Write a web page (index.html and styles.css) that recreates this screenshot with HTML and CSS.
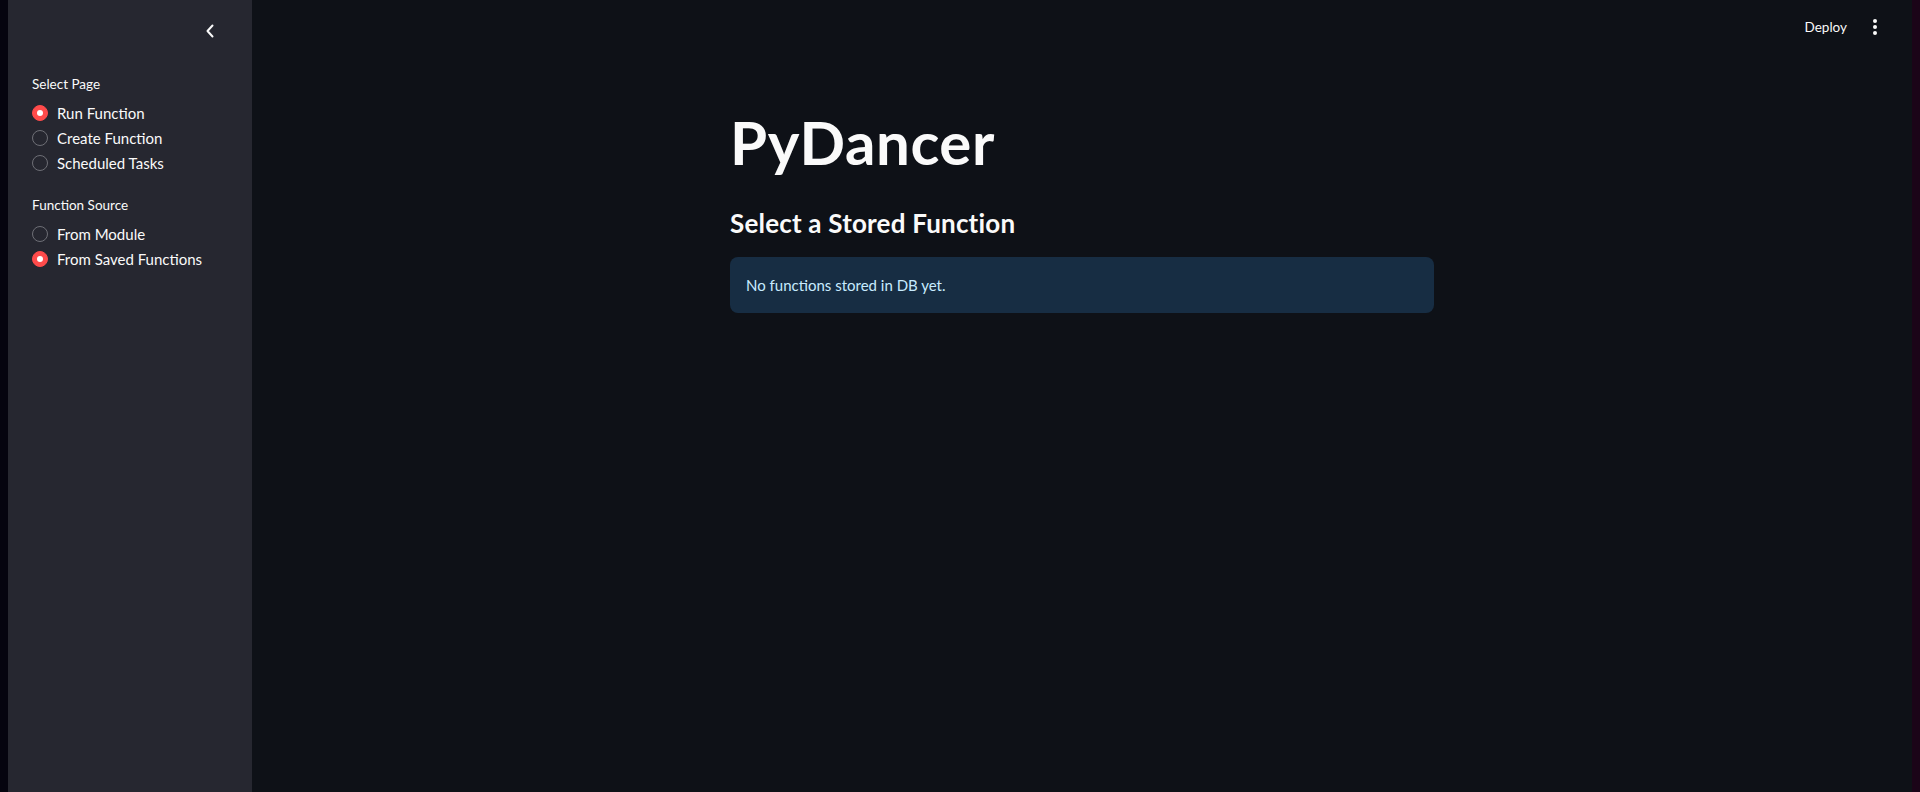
FILE: index.html
```html
<!DOCTYPE html>
<html lang="en">
<head>
<meta charset="utf-8">
<title>PyDancer</title>
<link rel="stylesheet" href="styles.css">
</head>
<body>
<div class="frame-left"></div>
<aside class="sidebar">
  <div class="sidebar-head">
    <button class="collapse" aria-label="Collapse sidebar">
      <svg width="10" height="14" viewBox="0 0 10 14"><path d="M7.5 1.5 L2.5 7 L7.5 12.5" fill="none" stroke="#fafafa" stroke-width="2" stroke-linecap="round" stroke-linejoin="round"/></svg>
    </button>
  </div>
  <div class="group">
    <div class="group-label">Select Page</div>
    <div class="radio-row"><span class="radio checked"></span><span>Run Function</span></div>
    <div class="radio-row"><span class="radio"></span><span>Create Function</span></div>
    <div class="radio-row"><span class="radio"></span><span>Scheduled Tasks</span></div>
  </div>
  <div class="group">
    <div class="group-label">Function Source</div>
    <div class="radio-row"><span class="radio"></span><span>From Module</span></div>
    <div class="radio-row"><span class="radio checked"></span><span>From Saved Functions</span></div>
  </div>
</aside>
<main class="main">
  <header class="topbar">
    <span class="deploy">Deploy</span>
    <span class="kebab"><i></i><i></i><i></i></span>
  </header>
  <section class="content">
    <h1 class="title">PyDancer</h1>
    <h3 class="subtitle">Select a Stored Function</h3>
    <div class="info">No functions stored in DB yet.</div>
  </section>
</main>
<div class="frame-right"></div>
</body>
</html>
```

FILE: styles.css
```css
* { box-sizing: border-box; }
html, body { margin: 0; padding: 0; }
body {
  display: flex;
  height: 792px;
  overflow: hidden;
  background: #0e1117;
  color: #fafafa;
  font-family: Lato, "Noto Sans", sans-serif;
}
.frame-left { width: 8px; background: #05040f; flex: none; }
.frame-right { width: 8px; background: #1b0418; flex: none; }

.sidebar {
  width: 244px;
  flex: none;
  background: #262730;
  padding-left: 24px;
}
.sidebar-head {
  height: 74px;
  display: flex;
  justify-content: flex-end;
  align-items: flex-start;
  padding-top: 24px;
  padding-right: 37px;
}
.collapse {
  background: none;
  border: 0;
  padding: 0;
  width: 10px;
  height: 14px;
  display: block;
}
.collapse svg { display: block; }
.group { margin-bottom: 20px; }
.group-label {
  font-size: 13.5px;
  line-height: 20px;
  margin-bottom: 6px;
}
.radio-row {
  height: 25px;
  display: flex;
  align-items: center;
  gap: 9px;
  font-size: 15px;
}
.radio {
  width: 16px;
  height: 16px;
  border-radius: 50%;
  border: 1px solid #6e6f76;
  flex: none;
  display: flex;
  align-items: center;
  justify-content: center;
}
.radio.checked {
  background: #ff4b4b;
  border-color: #ff4b4b;
}
.radio.checked::after {
  content: "";
  width: 6px;
  height: 6px;
  border-radius: 50%;
  background: #ffffff;
}

.main {
  flex: 1;
  display: flex;
  flex-direction: column;
}
.topbar {
  height: 54px;
  display: flex;
  justify-content: flex-end;
  align-items: center;
  gap: 26px;
  padding-right: 35px;
}
.deploy { font-size: 13.5px; }
.kebab {
  display: flex;
  flex-direction: column;
  gap: 2px;
}
.kebab i {
  display: block;
  width: 4px;
  height: 4px;
  border-radius: 50%;
  background: #fafafa;
}
.content {
  width: 704px;
  margin: 0 auto;
}
.title {
  margin: 53px 0 0;
  font-size: 60px;
  font-weight: 700;
  line-height: 70px;
  letter-spacing: 0.6px;
}
.subtitle {
  margin: 30px 0 0;
  font-size: 26px;
  font-weight: 700;
  line-height: 32px;
  letter-spacing: 0.2px;
}
.info {
  margin-top: 18px;
  height: 56px;
  border-radius: 8px;
  background: #172d43;
  color: #c7ebff;
  font-size: 15px;
  display: flex;
  align-items: center;
  padding: 0 16px;
}
```
